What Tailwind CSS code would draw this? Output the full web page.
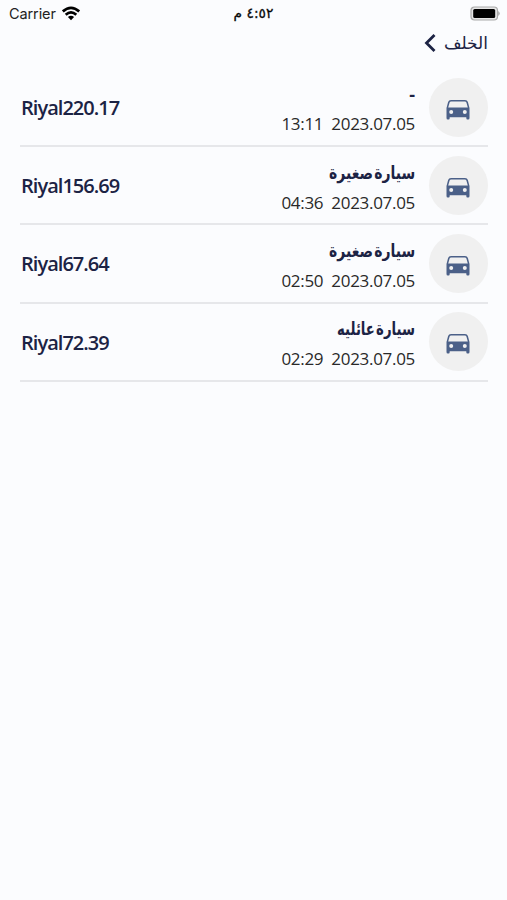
<!DOCTYPE html>
<html lang="ar">
<head>
  <meta charset="UTF-8">
  <title>الخلف</title>
  <script src="https://cdn.jsdelivr.net/npm/@tailwindcss/browser@4"></script>
</head>
<body class="h-[900px] overflow-hidden bg-[#fbfcfe] font-['Open_Sans','DejaVu_Sans',sans-serif] text-[#1c2344]">

  <!-- Status bar -->
  <div class="grid h-[27px] grid-cols-3 items-center pl-[9px] pr-[7px] text-[#222]">
    <div class="flex items-center gap-1.5 font-[Inter,sans-serif] text-[14.5px] tracking-[-0.1px]">
      <span>Carrier</span>
      <svg class="h-[15px] w-[18px]" viewBox="0 0 18 15" fill="none" stroke="#000" stroke-width="2.7">
        <path d="M.8 5.4Q9 -1.8 17.2 5.4"/>
        <path d="M3.7 8.7Q9 4 14.3 8.7"/>
        <path d="M9 14.2L5.9 11Q9 8.6 12.1 11Z" fill="#000" stroke="none"/>
      </svg>
    </div>
    <div class="pr-0.5 text-center font-['DejaVu_Sans',sans-serif] text-[13.8px] text-black [-webkit-text-stroke:0.3px_#222]" dir="rtl">٤:٥٢ م</div>
    <svg class="h-[15px] w-[30px] justify-self-end" viewBox="0 0 30 15">
      <rect x="1" y="1" width="26.5" height="13" rx="3.5" fill="#e6e6e6" stroke="#aaa" stroke-width="1.2"/>
      <rect x="3.2" y="3" width="22" height="9" rx="1.5" fill="#000"/>
      <path d="M28.3 5Q31 7.5 28.3 10Z" fill="#999"/>
    </svg>
  </div>

  <!-- Back link -->
  <div class="flex h-[42px] items-start justify-end gap-2 pr-[19px] pt-1">
    <svg class="mt-[2px] h-5 w-3" viewBox="0 0 12 20" fill="none" stroke="#1c2344" stroke-width="2.8">
      <path d="M10.5 2L2.5 10L10.5 18"/>
    </svg>
    <span class="font-['DejaVu_Sans',sans-serif] text-[17px] leading-6" dir="rtl">الخلف</span>
  </div>

  <svg class="hidden">
    <symbol id="car" viewBox="0 0 24 20">
      <path fill="#4b6088" fill-rule="evenodd" d="M5 0H19Q21.3 0 21.9 1.9L23.5 8V18Q23.5 19.5 22.2 19.5H21.4Q20.3 19.5 20.3 18V17.2H3.7V18Q3.7 19.5 2.6 19.5H1.8Q.5 19.5 .5 18V8L2.1 1.9Q2.7 0 5 0ZM5.2 1.5Q4 1.5 3.6 2.5L2.2 7.6H21.8L20.4 2.5Q20 1.5 18.8 1.5ZM5.2 10A2 2 0 1 0 5.2 14A2 2 0 1 0 5.2 10ZM18.8 10A2 2 0 1 0 18.8 14A2 2 0 1 0 18.8 10Z"/>
    </symbol>
  </svg>

  <!-- Trips -->
  <ul id="trips" class="ml-5 mr-[19px]"></ul>

  <script>
    const trips = [
      { price: 'Riyal220.17', name: '-', time: '13:11', nameClass: 'h-[30px]' },
      { price: 'Riyal156.69', name: 'سيارة صغيرة', time: '04:36', nameClass: 'h-[31px] scale-x-[0.775]' },
      { price: 'Riyal67.64', name: 'سيارة صغيرة', time: '02:50', nameClass: 'h-[31px] scale-x-[0.775]' },
      { price: 'Riyal72.39', name: 'سيارة عائليه', time: '02:29', nameClass: 'h-[31px] scale-x-[0.735]' }
    ];

    document.getElementById('trips').innerHTML = trips.map(({price, name, time, nameClass}) => `
      <li class="flex h-[78.2px] items-center border-b-2 border-[#e6e7ea]">
        <span class="grow pl-px pt-0.5 text-[20px] font-semibold tracking-[-0.97px]">${price}</span>
        <div class="mr-[14px] flex flex-col items-end pt-1">
          <span class="origin-right whitespace-nowrap text-[18px] font-bold leading-[29px] [word-spacing:-3px] ${nameClass}" dir="rtl">${name}</span>
          <span class="flex gap-2 text-[17px] leading-[28px] tracking-[-0.3px] text-[#292929]"><span>${time}</span><span>2023.07.05</span></span>
        </div>
        <div class="flex size-[59px] items-center justify-center rounded-full bg-[#f0f0f0] pr-0.5 pt-[5px]">
          <svg class="h-5 w-6"><use href="#car"/></svg>
        </div>
      </li>`).join('');
  </script>

</body>
</html>
